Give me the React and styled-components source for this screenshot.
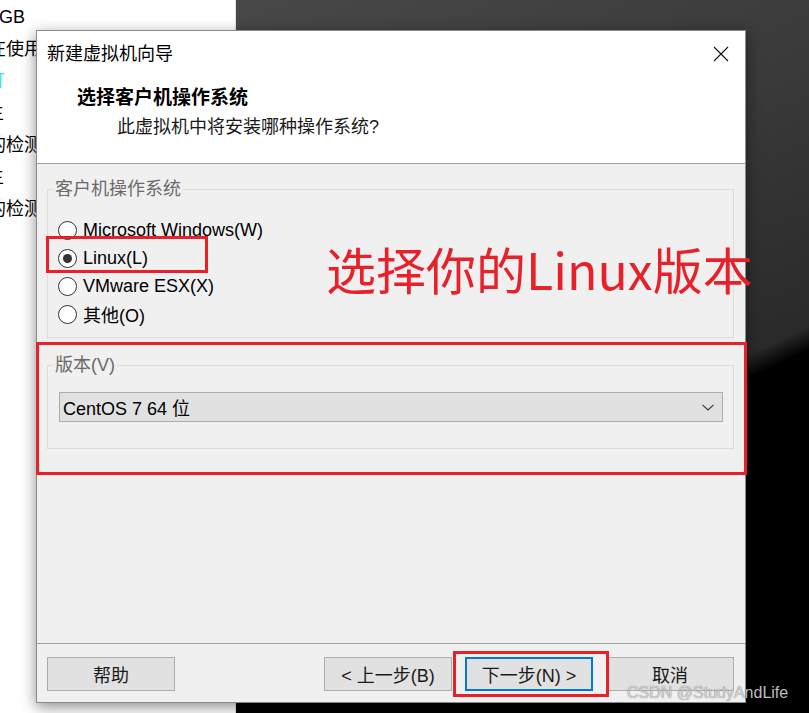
import React from 'react';
import styled, { createGlobalStyle } from 'styled-components';

const GlobalStyle = createGlobalStyle`
  html, body {
    margin: 0;
    padding: 0;
  }
  body {
    width: 809px;
    height: 713px;
    overflow: hidden;
    background: #000;
    font-family: "Liberation Sans", "Noto Sans CJK SC", sans-serif;
  }
`

const Desktop = styled.div`
  position: relative;
  width: 809px;
  height: 713px;
  display: grid;
  grid-template-columns: 236px 1fr;
  overflow: hidden;
`

const SidePanel = styled.div`
  background: #fff;
  border-right: 1px solid #e4e4e4;
  padding-top: 1px;
  overflow: hidden;
`

const SideLine = styled.div`
  height: 32px;
  line-height: 32px;
  font-size: 18px;
  white-space: nowrap;
  color: ${p => (p.$link ? '#3ee0ee' : '#000')};
  margin-left: ${p => -p.$shift}px;
`

const Wallpaper = styled.div`
  background: linear-gradient(155deg, #484848 0%, #3a3a3a 33%, #2a2a2a 60.5%, #181818 61.6%, #000 63%);
`

const Dialog = styled.div`
  position: absolute;
  left: 36px;
  top: 30px;
  width: 710px;
  height: 673px;
  box-sizing: border-box;
  border: 1px solid #8a8a8a;
  background: #f0f0f0;
  box-shadow: 0 4px 14px rgba(0, 0, 0, 0.45);
  display: flex;
  flex-direction: column;
  color: #000;
`

const TitleBar = styled.div`
  height: 45px;
  flex: none;
  background: #fff;
  display: flex;
  align-items: center;
  justify-content: space-between;
  padding-left: 10px;
`

const Title = styled.span`
  font-size: 18px;
  line-height: 24px;
`

const CloseButton = styled.div`
  width: 48px;
  height: 45px;
  display: flex;
  align-items: center;
  justify-content: center;
`

const Header = styled.div`
  height: 88px;
  flex: none;
  box-sizing: border-box;
  background: #fff;
  border-bottom: 1px solid #a0a0a0;
  padding-top: 9px;
`

const Heading = styled.div`
  font-size: 19px;
  font-weight: 700;
  line-height: 26px;
  padding-left: 40px;
`

const SubHeading = styled.div`
  font-size: 18px;
  line-height: 26px;
  margin-top: 3px;
  padding-left: 80px;
  color: #1a1a1a;
`

const Body = styled.div`
  flex: 1;
  border-bottom: 1px solid #a0a0a0;
  padding: 12px 11px 0 10px;
  display: flex;
  flex-direction: column;
  gap: 14px;
`

const GroupBox = styled.fieldset`
  margin: 0;
  padding: 0 0 ${p => p.$padBottom}px 5px;
  border: 1px solid #dcdcdc;
  min-width: 0;
`

const Legend = styled.legend`
  padding: 0 2px;
  font-size: 18px;
  line-height: 26px;
  color: #6a6a6a;
`

const RadioList = styled.div`
  margin-top: 14px;
  padding-left: 5px;
  display: flex;
  flex-direction: column;
`

const RadioRow = styled.label`
  height: 28px;
  display: flex;
  align-items: center;
  gap: 6px;
  font-size: 18px;
`

const RadioDot = styled.span`
  width: 19px;
  height: 19px;
  box-sizing: border-box;
  border: 1px solid #333;
  border-radius: 50%;
  background: #fff;
  display: flex;
  align-items: center;
  justify-content: center;
  &::after {
    content: '';
    width: 9px;
    height: 9px;
    border-radius: 50%;
    background: ${p => (p.$checked ? '#333' : 'transparent')};
  }
`

const Combo = styled.div`
  margin: 14px 10px 0 6px;
  height: 30px;
  box-sizing: border-box;
  border: 1px solid #adadad;
  background: #e1e1e1;
  display: flex;
  align-items: center;
  justify-content: space-between;
  padding: 0 8px 0 3px;
  font-size: 18px;
`

const Footer = styled.div`
  height: 58px;
  flex: none;
  padding: 13px 11px 0 10px;
  box-sizing: border-box;
  display: flex;
  align-items: flex-start;
  gap: 13px;
`

const Button = styled.div`
  width: 128px;
  height: 34px;
  box-sizing: border-box;
  border: ${p => (p.$default ? '2px solid #0078d7' : '1px solid #adadad')};
  background: #e1e1e1;
  display: flex;
  align-items: center;
  justify-content: center;
  font-size: 18px;
  color: #1a1a1a;
  margin-left: ${p => (p.$pushRight ? 'auto' : '0')};
`

const Mark = styled.div`
  position: absolute;
  left: ${p => p.$x}px;
  top: ${p => p.$y}px;
  width: ${p => p.$w}px;
  height: ${p => p.$h}px;
  box-sizing: border-box;
  border: 3px solid #e8202a;
  pointer-events: none;
`

const Callout = styled.div`
  position: absolute;
  left: 289px;
  top: 212px;
  font-family: "Noto Sans CJK SC", sans-serif;
  font-size: 50px;
  line-height: 50px;
  color: #e8202a;
  white-space: nowrap;
`

const Watermark = styled.div`
  position: absolute;
  left: 627px;
  top: 683px;
  font-family: "Liberation Sans", sans-serif;
  font-size: 16px;
  line-height: 20px;
  color: rgba(225, 225, 225, 0.85);
  text-shadow: 0 0 1px rgba(0, 0, 0, 0.6);
  white-space: nowrap;
`

const sideLines = [
  { text: 'GB', shift: 1 },
  { text: '在使用', shift: 12 },
  { text: '打', shift: 13, link: true },
  { text: '主', shift: 14 },
  { text: '的检测', shift: 12 },
  { text: '主', shift: 14 },
  { text: '的检测', shift: 12 },
];

const osOptions = [
  { label: 'Microsoft Windows(W)' },
  { label: 'Linux(L)', checked: true },
  { label: 'VMware ESX(X)' },
  { label: '其他(O)' },
];

function CloseIcon() {
  return (
    <svg width="16" height="16" viewBox="0 0 16 16">
      <path d="M1 1 L15 15 M15 1 L1 15" stroke="#111" strokeWidth="1.1" fill="none" />
    </svg>
  );
}

function Chevron() {
  return (
    <svg width="12" height="7" viewBox="0 0 12 7">
      <path d="M0.5 0.8 L6 6 L11.5 0.8" stroke="#333" strokeWidth="1.1" fill="none" />
    </svg>
  );
}

export default function App() {
  return (
    <>
      <GlobalStyle />
      <Desktop>
        <SidePanel>
          {sideLines.map((l, i) => (
            <SideLine key={i} $shift={l.shift} $link={l.link}>{l.text}</SideLine>
          ))}
        </SidePanel>
        <Wallpaper />

        <Dialog>
          <TitleBar>
            <Title>新建虚拟机向导</Title>
            <CloseButton><CloseIcon /></CloseButton>
          </TitleBar>
          <Header>
            <Heading>选择客户机操作系统</Heading>
            <SubHeading>此虚拟机中将安装哪种操作系统?</SubHeading>
          </Header>
          <Body>
            <GroupBox $padBottom={9}>
              <Legend>客户机操作系统</Legend>
              <RadioList>
                {osOptions.map(o => (
                  <RadioRow key={o.label}>
                    <RadioDot $checked={o.checked} />
                    {o.label}
                  </RadioRow>
                ))}
              </RadioList>
            </GroupBox>
            <GroupBox $padBottom={26}>
              <Legend>版本(V)</Legend>
              <Combo>
                <span>CentOS 7 64 位</span>
                <Chevron />
              </Combo>
            </GroupBox>
          </Body>
          <Footer>
            <Button>帮助</Button>
            <Button $pushRight>&lt; 上一步(B)</Button>
            <Button $default>下一步(N) &gt;</Button>
            <Button>取消</Button>
          </Footer>

          <Mark $x={9} $y={205} $w={162} $h={37} />
          <Mark $x={-1} $y={311} $w={711} $h={133} />
          <Mark $x={416} $y={620} $w={156} $h={46} />
          <Callout>选择你的Linux版本</Callout>
        </Dialog>

        <Watermark>CSDN @StudyAndLife</Watermark>
      </Desktop>
    </>
  );
}
